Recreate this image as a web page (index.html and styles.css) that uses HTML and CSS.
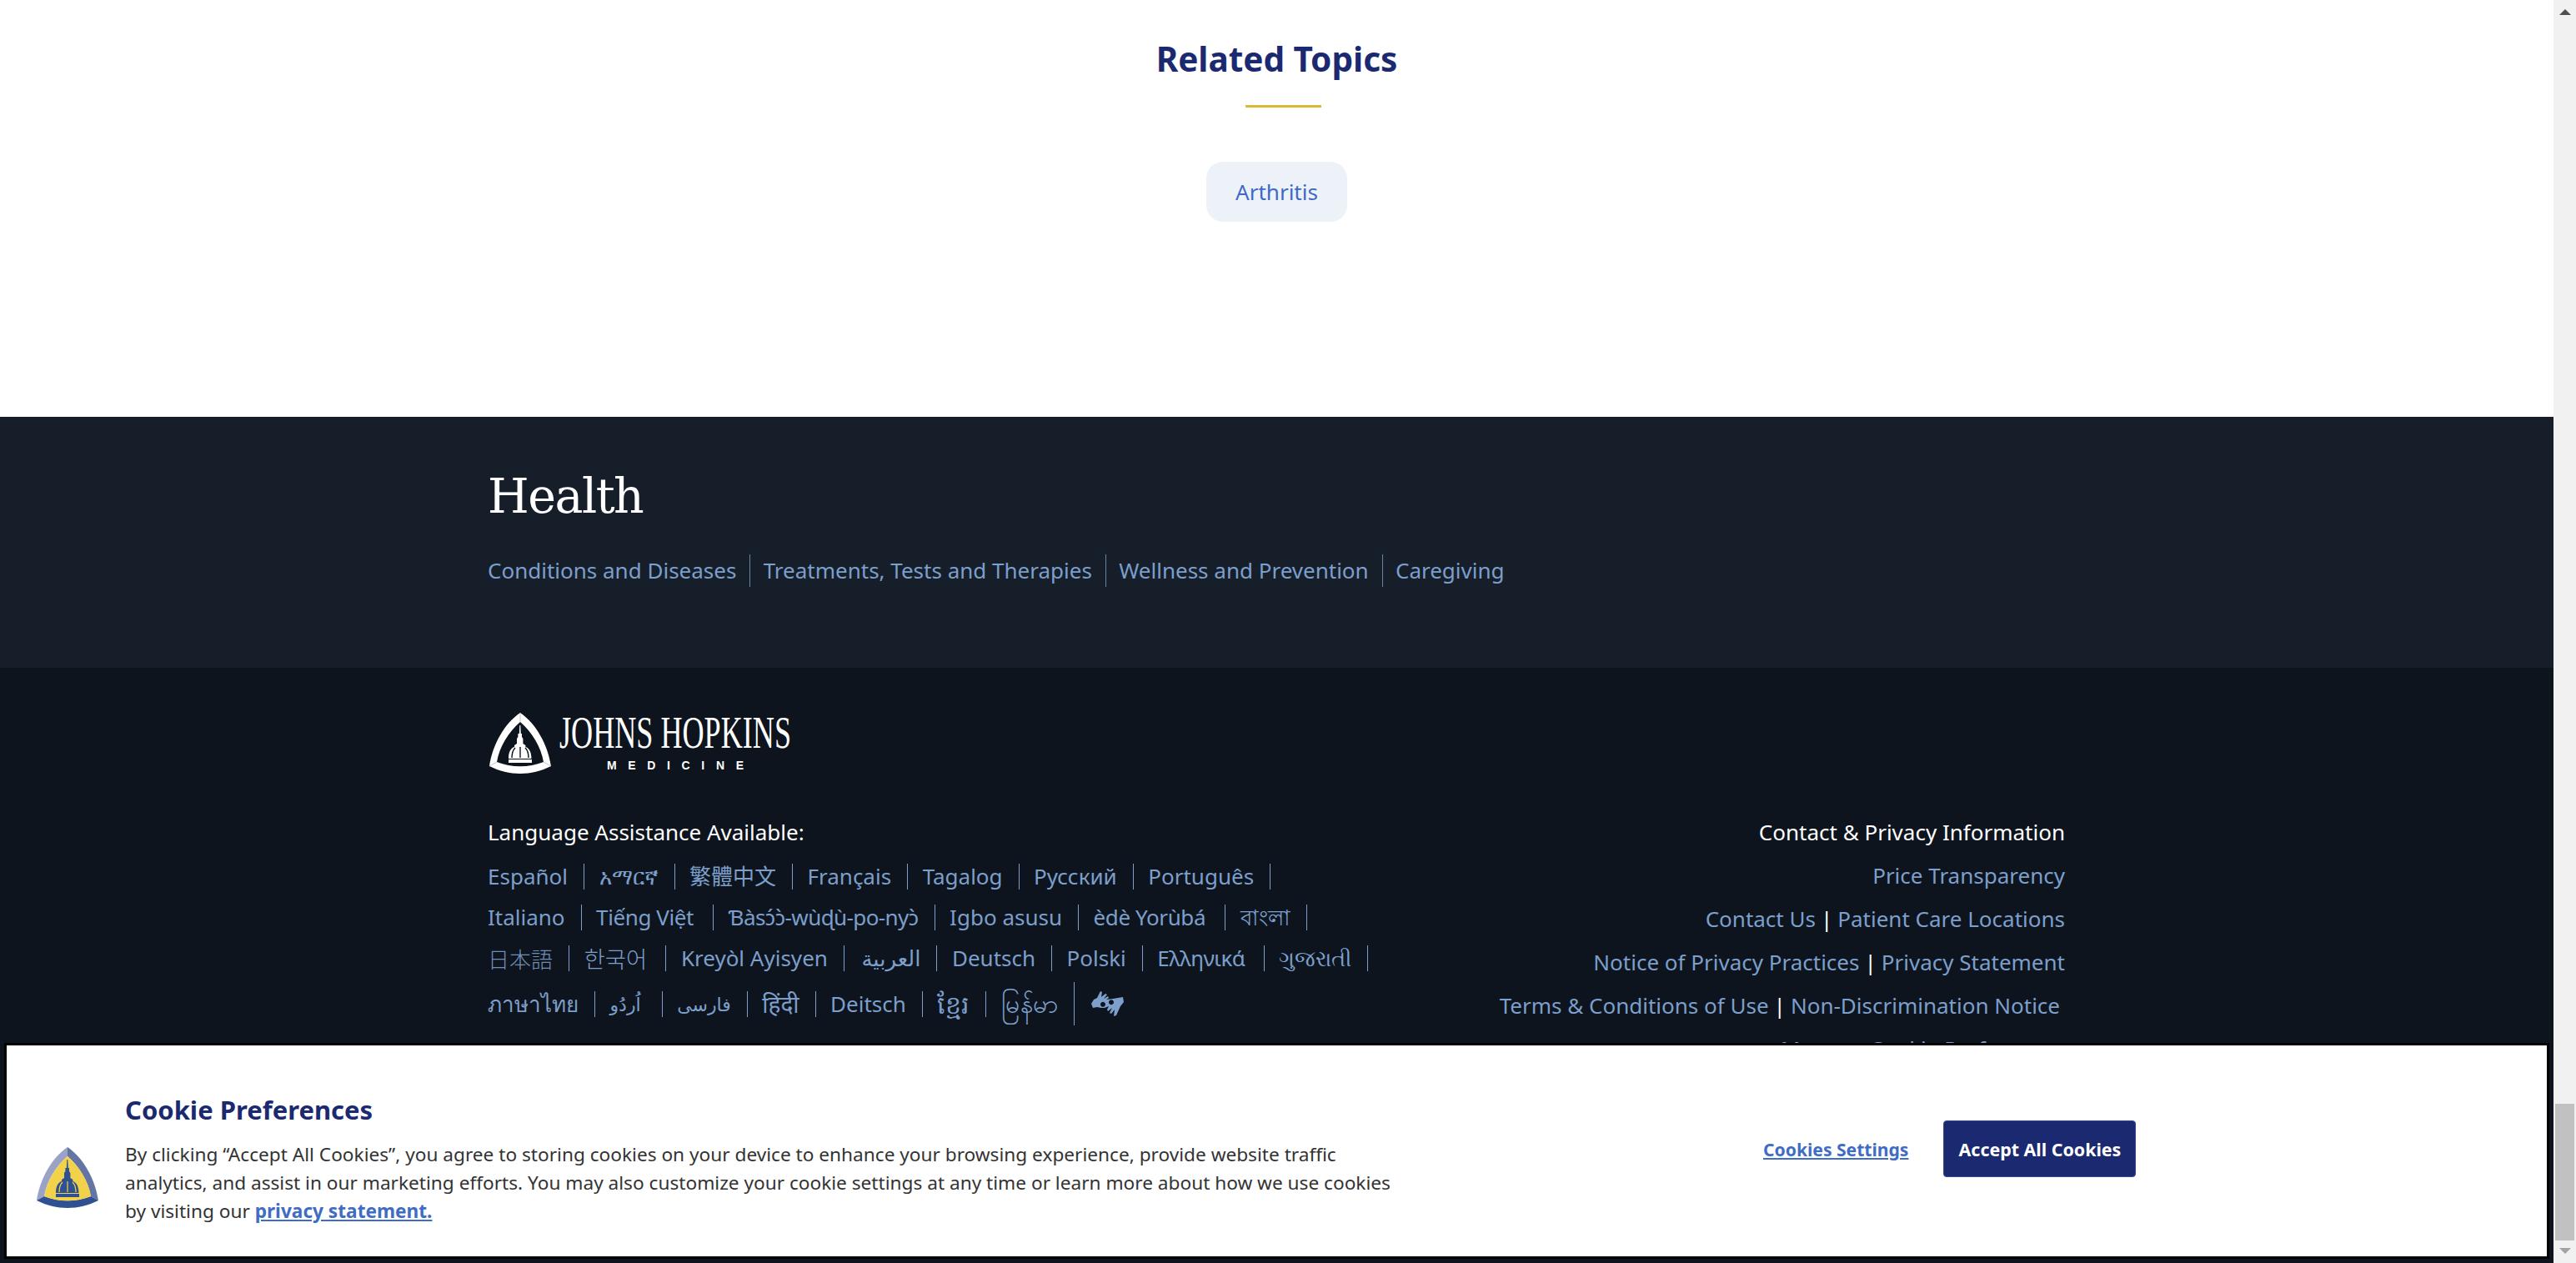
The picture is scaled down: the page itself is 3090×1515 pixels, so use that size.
FILE: index.html
```html
<!DOCTYPE html>
<html lang="en">
<head>
<meta charset="utf-8">
<title>Related Topics</title>
<link rel="stylesheet" href="styles.css">
</head>
<body>
<svg class="defs" width="0" height="0" aria-hidden="true">
  <defs>
    <path id="dome" d="M36.3 15h1l.5 10h1.2v4l1.4 2v6l3 2v2c4 1 7 6 7 13v1H23v-1c0-7 3-12 7-13v-2l3-2v-6l1.4-2v-4h1.4zM23 56h28v4H23z"/>
  </defs>
</svg>
<div class="page">
  <section class="related">
    <h2 class="related-title">Related Topics</h2>
    <div class="related-rule"></div>
    <a class="pill">Arthritis</a>
  </section>
  <section class="health">
    <div class="wrap">
      <h2 class="health-title">Health</h2>
      <nav class="health-links">
        <a>Conditions and Diseases</a><a>Treatments, Tests and Therapies</a><a>Wellness and Prevention</a><a>Caregiving</a>
      </nav>
    </div>
  </section>
  <footer class="footer">
    <div class="wrap">
      <svg class="jhm-logo" width="365" height="90" viewBox="0 -15 365 90" role="img" aria-label="Johns Hopkins Medicine">
        <path class="logo-frame" fill-rule="evenodd" d="M39 0C58 13 72 38 76 64 52 76 26 76 2 64 6 38 20 13 39 0zM39 11C25 23 14 41 11 59 29 66 49 66 67 59 64 41 53 23 39 11z"/>
        <use href="#dome" x="2" class="logo-frame"/>
        <path class="dome-ribs" d="M33 42c-3 3-4 7-4 12M39 41v13M45 42c3 3 4 7 4 12"/>
        <path class="logo-seams" d="M39 0v11M2 64l9-5M76 64l-9-5"/>
        <text class="logo-name" transform="scale(1 1.5)" x="86" y="28" textLength="278" lengthAdjust="spacingAndGlyphs">JOHNS HOPKINS</text>
        <text class="logo-sub" x="143" y="68" textLength="164">MEDICINE</text>
      </svg>
      <div class="foot-cols">
        <div class="lang">
          <h3 class="foot-head">Language Assistance Available:</h3>
          <div class="lang-row">
            <a>Español</a><a>አማርኛ</a><a>繁體中文</a><a>Français</a><a>Tagalog</a><a>Русский</a><a>Português</a>
          </div>
          <div class="lang-row">
            <a>Italiano</a><a class="snug">Tiếng Việt</a><a class="snugger">Ɓàsɔ́ɔ̀-wùɖù-po-nyɔ̀</a><a>Igbo asusu</a><a class="snug">èdè Yorùbá</a><a>বাংলা</a>
          </div>
          <div class="lang-row">
            <a class="cjk-ja" lang="ja">日本語</a><a class="cjk-ko" lang="ko">한국어</a><a>Kreyòl Ayisyen</a><a class="arabic">العربية</a><a>Deutsch</a><a>Polski</a><a class="greek">Ελληνικά</a><a>ગુજરાતી</a>
          </div>
          <div class="lang-row lang-last">
            <a>ภาษาไทย</a><a class="small-script urdu">اُردُو</a><a class="small-script">فارسی</a><a class="deva">हिंदी</a><a>Deitsch</a><a class="large-script">ខ្មែរ</a><a class="tall large-script">မြန်မာ</a>
            <svg class="asl" width="40" height="30" viewBox="0 0 40 30" role="img" aria-label="American Sign Language">
              <path fill-rule="evenodd" d="M0 15l3-5 4-2 4-8 2 1-1 6 5-4 2 1-4 5 5-3 1 2-3 2 8-1 12-2 1 6-4 5-5 11-3 1 1-8-4 5-2-1 3-6-5 4-1-2 2-4-5 2h-4l-5-1-5 1zM14 12.700a3 3 0 1 0 .01 0zM24 10.300a3 3 0 1 0 .01 0z"/>
            </svg>
          </div>
        </div>
        <div class="contact">
          <h3 class="foot-head">Contact &amp; Privacy Information</h3>
          <p class="contact-row"><a>Price Transparency</a></p>
          <p class="contact-row"><a>Contact Us</a><span class="bar">|</span><a>Patient Care Locations</a></p>
          <p class="contact-row"><a>Notice of Privacy Practices</a><span class="bar">|</span><a>Privacy Statement</a></p>
          <p class="contact-row row-inset"><a>Terms &amp; Conditions of Use</a><span class="bar">|</span><a>Non-Discrimination Notice</a></p>
          <p class="contact-row"><a>Manage Cookie Preferences</a></p>
        </div>
      </div>
    </div>
  </footer>
</div>
<div class="scrollbar" aria-hidden="true">
  <div class="arrow arrow-up"></div>
  <div class="thumb"></div>
  <div class="arrow arrow-down"></div>
</div>
<aside class="cookie">
  <svg class="cookie-logo" width="78" height="74" viewBox="0 0 78 74" role="img" aria-label="Johns Hopkins shield">
    <path class="c-left" d="M39 0C20 13 6 38 2 64l9-5C14 41 25 23 39 11z"/>
    <path class="c-right" d="M39 0c19 13 33 38 37 64l-9-5C64 41 53 23 39 11z"/>
    <path class="c-bottom" d="M2 64c24 12 50 12 74 0l-9-5c-18 7-38 7-56 0z"/>
    <path class="c-inner" d="M39 11C25 23 14 41 11 59c18 7 38 7 56 0C64 41 53 23 39 11z"/>
    <use href="#dome" x="2" class="c-dome"/>
    <path class="c-ribs" d="M33 42c-3 3-4 7-4 12M39 41v13M45 42c3 3 4 7 4 12"/>
  </svg>
  <div class="cookie-copy">
    <h2 class="cookie-title">Cookie Preferences</h2>
    <p class="cookie-text">By clicking “Accept All Cookies”, you agree to storing cookies on your device to enhance your browsing experience, provide website traffic analytics, and assist in our marketing efforts. You may also customize your cookie settings at any time or learn more about how we use cookies by visiting our <a class="cookie-link">privacy statement.</a></p>
  </div>
  <div class="cookie-actions">
    <a class="cookie-link settings">Cookies Settings</a>
    <button class="accept">Accept All Cookies</button>
  </div>
</aside>
</body>
</html>
```
FILE: styles.css
```css
* { box-sizing: border-box; }
html, body { margin: 0; height: 100%; overflow: hidden; }
body {
  display: flex;
  font-family: "Noto Sans", "Noto Sans CJK SC", "DejaVu Sans", sans-serif;
  font-size: 26px;
  background: #fff;
}
.defs { position: absolute; }
.page { flex: 1; min-width: 0; height: 100vh; overflow: hidden; }
a { color: inherit; text-decoration: none; }

.related { height: 500px; display: flex; flex-direction: column; align-items: center; padding-top: 41px; }
.related-title { margin: 0; font-size: 40.5px; line-height: 60px; font-weight: 700; color: #1b2a70; }
.related-rule { width: 91px; height: 3px; background: #dcb934; margin: 25px 0 0 16px; }
.pill {
  margin-top: 65px;
  height: 72px;
  padding: 0 35px;
  border-radius: 20px;
  background: #edf2f9;
  color: #3f69c6;
  line-height: 72px;
}

.wrap { width: 1892px; margin-left: 585px; }
.health { height: 301px; background: #161e2a; padding-top: 52px; }
.health-title { margin: 0; font-family: "DejaVu Serif", serif; font-weight: 400; font-size: 57px; letter-spacing: -1.5px; line-height: 86px; color: #fff; }
.health-links { display: flex; margin-top: 27px; color: #7c9fcb; }
.health-links a { padding: 0 16px 0 15.300px; border-right: 1px solid #6a83a3; line-height: 39px; }
.health-links a:first-child { padding-left: 0; }
.health-links a:last-child { border-right: 0; }

.footer { background: #0d141d; height: 714px; padding-top: 39px; color: #7c9fcb; }
.jhm-logo { display: block; }
.logo-frame { fill: #fff; }
.dome-ribs { fill: none; stroke: #0d141d; stroke-width: 1.4; }
.logo-seams { fill: none; stroke: #9a9fa6; stroke-width: .6; }
.logo-name { font-family: "Liberation Serif", serif; font-size: 36px; fill: #fff; }
.logo-sub { font-family: "Liberation Sans", sans-serif; font-size: 14px; font-weight: 700; fill: #fff; }

.foot-cols { display: flex; justify-content: space-between; margin-top: 50px; }
.foot-head { margin: 0 0 11px; font-size: 26px; line-height: 36px; font-weight: 400; color: #fff; }
.lang-row { display: flex; align-items: center; height: 49px; }
.lang-row a { padding: 0 19px 0 17.500px; border-right: 1px solid #7c9fcb; line-height: 31px; height: 31px; white-space: nowrap; }
.lang-row a:first-child { padding-left: 0; }
.lang-last { height: 56px; margin-top: 2px; }
.lang-last .tall { height: 52px; line-height: 52px; }
.lang-row .snug { letter-spacing: -.4px; padding-right: 23px; }
.lang-row .snugger { letter-spacing: -.6px; }
.lang-row .small-script { font-size: 22px; }
.lang-row .urdu { padding-right: 25px; }
.lang-row .large-script { font-size: 30px; }
.lang-row .deva { font-size: 28px; }
.lang-row .arabic { padding-left: 20.500px; }
.lang-row .greek { letter-spacing: -.5px; padding-right: 22px; }
.lang-row .cjk-ja { font-family: "Noto Sans CJK JP", sans-serif; font-weight: 300; color: #6f8fb8; border-right-color: #7c9fcb; }
.lang-row .cjk-ko { font-family: "Noto Sans CJK KR", sans-serif; font-weight: 300; font-size: 27.500px; padding-right: 22px; }
.asl { margin-left: 20px; fill: #7c9fcb; }

.contact { text-align: right; }
.contact-row { margin: 0; height: 52px; line-height: 52px; white-space: nowrap; }
.contact .foot-head { margin-bottom: 8px; }
.bar { color: #fff; margin: 0 6px; }
.row-inset { padding-right: 6px; }

.scrollbar { width: 27px; height: 100vh; background: #f1f1f1; display: flex; flex-direction: column; align-items: center; }
.arrow { width: 0; height: 0; border-left: 7px solid transparent; border-right: 7px solid transparent; }
.arrow-up { border-bottom: 7px solid #505050; margin-top: 11px; }
.arrow-down { border-top: 7px solid #a3a3a3; margin: 9px 0 11px; }
.thumb { width: 23px; height: 164px; background: #c1c1c1; margin-top: auto; }

.cookie {
  position: fixed;
  left: 5px;
  top: 1251px;
  width: 3053px;
  height: 259px;
  border: 3px solid #000;
  background: #fff;
  display: flex;
  align-items: flex-start;
}
.cookie-logo { margin: 122px 0 0 34px; flex: none; }
.cookie-copy { width: 1530px; margin: 56px 0 0 30px; flex: none; }
.cookie-title { margin: 0; font-size: 31px; line-height: 42px; font-weight: 700; color: #1b2a70; }
.cookie-text { margin: 16px 0 0; font-size: 22.650px; line-height: 34px; color: #333; }
.cookie-link { font-weight: 700; color: #3f6cc4; text-decoration: underline; }
.cookie-actions { display: flex; align-items: center; margin: 90px 0 0 435px; }
.settings { font-size: 21.100px; }
.accept {
  margin-left: 42px;
  width: 231px;
  height: 68px;
  border: 1px solid #3b4a8c;
  border-radius: 4px;
  background: #1b2a70;
  color: #fff;
  font-family: inherit;
  font-size: 21.400px;
  font-weight: 700;
  padding: 0;
}
.c-left { fill: #9aa3c6; }
.c-right { fill: #6474a3; }
.c-bottom { fill: #2f5192; }
.c-inner { fill: #f2d24a; }
.c-dome { fill: #2f5192; }
.c-ribs { fill: none; stroke: #f2d24a; stroke-width: 1.2; }
```
